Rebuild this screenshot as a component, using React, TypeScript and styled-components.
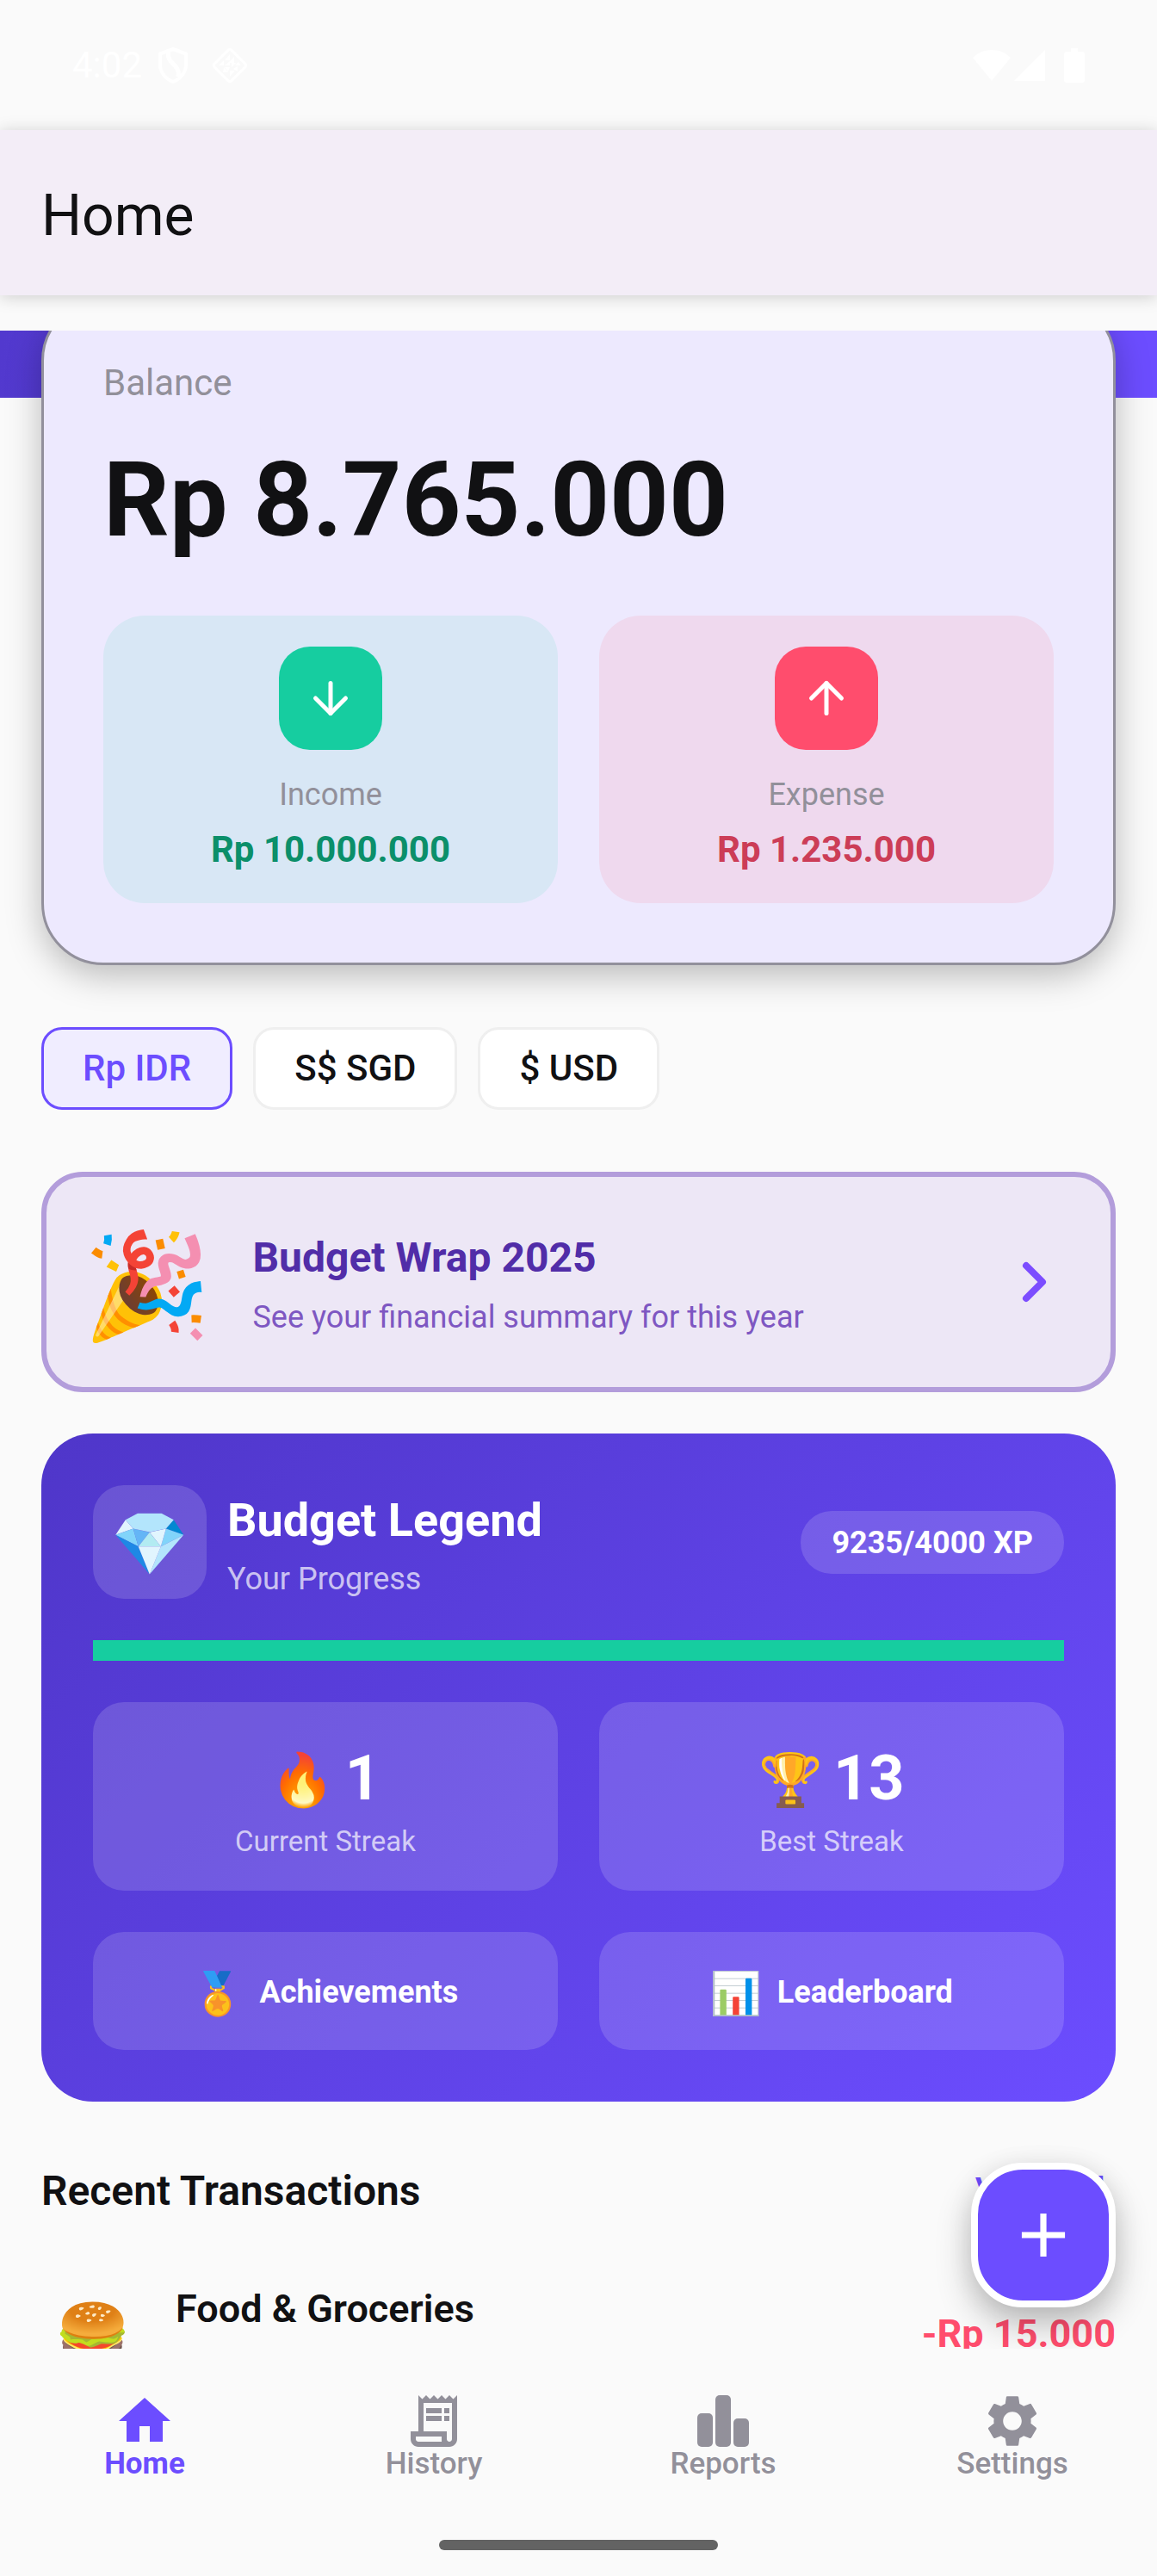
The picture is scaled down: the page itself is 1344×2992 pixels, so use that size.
import React from "react";
import styled, { createGlobalStyle } from "styled-components";
import { ArrowDown, ArrowUp } from "lucide-react";
import { MdAdd, MdHome, MdOutlineReceiptLong, MdSettings } from "react-icons/md";

const color = {
  page: "#fafafa",
  ink: "#111113",
  muted: "#92909a",
  primary: "#6c4dff",
  primaryDark: "#4f36c9",
  income: "#16cda0",
  expense: "#ff4d6d",
};

const GlobalStyle = createGlobalStyle`
  *, *::before, *::after { box-sizing: border-box; }
  body {
    margin: 0;
    background: ${color.page};
    color: ${color.ink};
    font-family: Roboto, "Noto Sans", sans-serif;
  }
  h1, h2, h3, p { margin: 0; font-weight: inherit; }
  button { font-family: inherit; border: 0; padding: 0; cursor: pointer; }
  a { color: inherit; text-decoration: none; }
  svg { display: block; flex: none; }
`;

const Shell = styled.div`
  display: flex;
  flex-direction: column;
  height: 100vh;
`;

/* Status bar and header */

const StatusBar = styled.div`
  display: flex;
  align-items: center;
  justify-content: space-between;
  height: 151px;
  flex: none;
  padding: 0 84px;
  color: #fff;
`;

const StatusGroup = styled.div<{ $gap: number }>`
  display: flex;
  align-items: center;
  gap: ${(p) => p.$gap}px;
`;

const Clock = styled.time`
  font-size: 42px;
  line-height: 52px;
`;

const Header = styled.header`
  display: flex;
  align-items: center;
  height: 192px;
  flex: none;
  margin-bottom: 41px;
  padding: 8px 48px 0;
  background: #f3edf7;
  box-shadow: 0 2px 18px rgba(0, 0, 0, 0.18);
`;

const PageTitle = styled.h1`
  font-size: 66px;
  line-height: 84px;
`;

/* Scrolling body */

const Body = styled.main`
  position: relative;
  flex: 1;
  min-height: 0;
  overflow: hidden;
`;

const Scroller = styled.div`
  height: 100%;
  overflow-x: hidden;
  overflow-y: auto;
  scrollbar-width: none;
`;

const Hero = styled.div`
  height: 78px;
  background: linear-gradient(100deg, #5239ce, ${color.primary} 96%);
`;

const Content = styled.div`
  padding: 0 48px;
  margin-top: -115px;
`;

const BalanceCard = styled.section`
  position: relative;
  padding: 69px;
  border: 3px solid #92909c;
  border-radius: 72px;
  background: #ede9fe;
  box-shadow: 0 12px 40px rgba(0, 0, 0, 0.26);
`;

const BalanceLabel = styled.h2`
  font-size: 42px;
  line-height: 52px;
  color: ${color.muted};
`;

const BalanceAmount = styled.p`
  margin: 36px 0 60px;
  font-size: 120px;
  line-height: 148px;
  font-weight: 700;
`;

const TwoColumns = styled.div`
  display: grid;
  grid-template-columns: 1fr 1fr;
  gap: 48px;
`;

const FlowTile = styled.div<{ $background: string }>`
  display: flex;
  flex-direction: column;
  align-items: center;
  padding: 36px;
  border-radius: 48px;
  background: ${(p) => p.$background};
`;

const FlowIcon = styled.span<{ $background: string }>`
  display: grid;
  place-items: center;
  width: 120px;
  height: 120px;
  margin-bottom: 26px;
  border-radius: 36px;
  background: ${(p) => p.$background};
  color: #fff;
`;

const FlowLabel = styled.h3`
  margin-bottom: 12px;
  font-size: 36px;
  line-height: 52px;
  color: ${color.muted};
`;

const FlowAmount = styled.p<{ $color: string }>`
  font-size: 42px;
  line-height: 52px;
  font-weight: 700;
  color: ${(p) => p.$color};
`;

/* Currency chips */

const Chips = styled.div`
  display: flex;
  gap: 24px;
  margin: 72px 0;
`;

const Chip = styled.button<{ $active: boolean }>`
  height: 96px;
  padding: 0 45px;
  border: 3px solid ${(p) => (p.$active ? color.primary : "#efefef")};
  border-radius: 24px;
  background: ${(p) => (p.$active ? "#f0edff" : "#fff")};
  color: ${(p) => (p.$active ? color.primary : color.ink)};
  font-size: 42px;
  line-height: 52px;
  font-weight: 500;
`;

/* Yearly wrap banner */

const Banner = styled.a`
  display: flex;
  align-items: center;
  gap: 48px;
  height: 256px;
  padding: 0 42px;
  border: 6px solid #b39ddb;
  border-radius: 48px;
  background: #ede7f6;
`;

const Emoji = styled.span<{ $size: number }>`
  padding-top: ${(p) => Math.round(p.$size / 12)}px;
  font-family: "Noto Color Emoji", sans-serif;
  font-size: ${(p) => p.$size}px;
  line-height: 1.2;
  font-weight: 400;
`;

const Stack = styled.div`
  display: flex;
  flex-direction: column;
  gap: 12px;
  flex: 1;
  padding-top: 2px;
`;

const BannerTitle = styled.h2`
  font-size: 48px;
  line-height: 68px;
  font-weight: 700;
  color: #512da8;
`;

const BannerText = styled.p`
  font-size: 36px;
  line-height: 46px;
  color: #7e57c2;
`;

/* Progress card */

const ProgressCard = styled.section`
  display: flex;
  flex-direction: column;
  gap: 48px;
  margin: 48px 0 74px;
  padding: 60px;
  border-radius: 60px;
  background: linear-gradient(135deg, ${color.primaryDark}, ${color.primary});
  color: #fff;
`;

const RankRow = styled.div`
  display: flex;
  align-items: center;
  gap: 24px;
`;

const RankBadge = styled.span`
  display: grid;
  place-items: center;
  width: 132px;
  height: 132px;
  border-radius: 36px;
  background: rgba(255, 255, 255, 0.15);
`;

const RankTitle = styled.h2`
  font-size: 54px;
  line-height: 72px;
  font-weight: 700;
`;

const RankText = styled.p`
  font-size: 36px;
  line-height: 40px;
  color: rgba(255, 255, 255, 0.7);
`;

const XpPill = styled.span`
  padding: 13px 36px 12px;
  border-radius: 36px;
  background: rgba(255, 255, 255, 0.15);
  font-size: 36px;
  line-height: 48px;
  font-weight: 700;
`;

const ProgressTrack = styled.div`
  height: 24px;
  background: rgba(255, 255, 255, 0.2);
`;

const ProgressFill = styled.div`
  height: 100%;
  background: ${color.income};
`;

const StreakTile = styled.div`
  padding: 36px;
  border-radius: 36px;
  background: rgba(255, 255, 255, 0.15);
  text-align: center;
`;

const StreakValue = styled.p`
  display: flex;
  align-items: center;
  justify-content: center;
  gap: 12px;
  height: 105px;
  font-size: 72px;
  line-height: 105px;
  font-weight: 700;
`;

const StreakLabel = styled.h3`
  font-size: 33px;
  line-height: 42px;
  color: rgba(255, 255, 255, 0.7);
`;

const CardButton = styled.button`
  display: flex;
  align-items: center;
  justify-content: center;
  gap: 18px;
  height: 137px;
  padding-top: 2px;
  border-radius: 36px;
  background: rgba(255, 255, 255, 0.15);
  color: #fff;
  font-size: 36px;
  line-height: 48px;
  font-weight: 700;
`;

/* Recent transactions */

const SectionHead = styled.div`
  display: flex;
  align-items: center;
  justify-content: space-between;
  margin-bottom: 76px;
`;

const SectionTitle = styled.h2`
  font-size: 48px;
  line-height: 60px;
  font-weight: 600;
`;

const ViewAll = styled.a`
  padding: 0 12px;
  font-size: 42px;
  line-height: 52px;
  font-weight: 500;
  color: ${color.primary};
`;

const Transaction = styled.article`
  display: flex;
  align-items: center;
  gap: 36px;
`;

const CategoryIcon = styled.span`
  display: grid;
  place-items: center;
  width: 120px;
  height: 120px;
`;

const Category = styled.h3`
  flex: 1;
  min-height: 112px;
  font-size: 45px;
  line-height: 54px;
  font-weight: 600;
`;

const Amount = styled.p`
  font-size: 45px;
  line-height: 54px;
  font-weight: 700;
  color: ${color.expense};
`;

const AddButton = styled.button`
  position: absolute;
  right: 48px;
  bottom: 48px;
  display: grid;
  place-items: center;
  width: 168px;
  height: 168px;
  border: 8px solid #fff;
  border-radius: 60px;
  background: ${color.primary};
  color: #fff;
  box-shadow: 0 20px 40px rgba(0, 0, 0, 0.24), 0 4px 30px rgba(0, 0, 0, 0.08);
`;

/* Bottom navigation */

const Footer = styled.footer`
  flex: none;
  padding: 48px 0 30px;
`;

const Tabs = styled.nav`
  display: grid;
  grid-template-columns: repeat(4, 1fr);
  margin-bottom: 74px;
`;

const Tab = styled.a<{ $active: boolean }>`
  display: flex;
  flex-direction: column;
  align-items: center;
  font-size: 35px;
  line-height: 28px;
  font-weight: ${(p) => (p.$active ? 700 : 500)};
  color: ${(p) => (p.$active ? color.primary : color.muted)};
`;

const HomeHandle = styled.div`
  width: 324px;
  height: 12px;
  margin: 0 auto;
  border-radius: 6px;
  background: #636363;
`;

const ShieldIcon = () => (
  <svg width="36" height="44" viewBox="0 0 36 44" fill="none" stroke="currentColor" strokeWidth="4">
    <path d="M18 3 L33 8.500 V21 C33 30 27 37.500 18 41 C9 37.500 3 30 3 21 V8.500 Z" strokeLinejoin="round" />
    <path d="M13 6 C9 20 27 20 24 35" strokeWidth="5" />
  </svg>
);

const DiamondIcon = () => (
  <svg width="44" height="44" viewBox="0 0 44 44" fill="currentColor">
    <rect x="8" y="8" width="28" height="28" rx="3" transform="rotate(45 22 22)" fill="none" stroke="currentColor" strokeWidth="3" />
    <path d="M22 9v7h-6zM22 17l5-5v7h-5zM9 22l6-6v6zM16 22l6-5v5zM24 19h5l-5 5zM35 22h-7l4-4zM22 24h-6l4 5zM22 35v-7h6zM15 24l-1 6h6zM26 26l5-3v6z" />
  </svg>
);

const WifiIcon = () => (
  <svg width="44" height="36" viewBox="0 0 44 36" fill="currentColor">
    <path d="M0 9C12-3 32-3 44 9L22 36Z" />
  </svg>
);

const SignalIcon = () => (
  <svg width="36" height="36" viewBox="0 0 36 36" fill="currentColor">
    <path d="M36 0V36H0Z" />
  </svg>
);

const BatteryIcon = () => (
  <svg width="24" height="40" viewBox="0 0 24 40" fill="currentColor">
    <path d="M8 0h8v4h5q3 0 3 3v30q0 3-3 3H3q-3 0-3-3V7q0-3 3-3h5z" />
  </svg>
);

const ChevronIcon = () => (
  <svg width="96" height="96" viewBox="0 0 96 96" fill="none" stroke="#7c4dff" strokeWidth="8" strokeLinecap="round" strokeLinejoin="round">
    <path d="M40 29L59 48L40 67" />
  </svg>
);

const BarsIcon = () => (
  <svg width="72" height="72" viewBox="0 0 72 72" fill="currentColor">
    <rect x="6" y="27" width="18" height="39" rx="5" />
    <rect x="27" y="6" width="18" height="60" rx="5" />
    <rect x="48" y="33" width="18" height="33" rx="5" />
  </svg>
);

const currencies = [
  { code: "IDR", label: "Rp IDR" },
  { code: "SGD", label: "S$ SGD" },
  { code: "USD", label: "$ USD" },
];

const tabs = [
  { label: "Home", icon: <MdHome size={72} /> },
  { label: "History", icon: <MdOutlineReceiptLong size={72} /> },
  { label: "Reports", icon: <BarsIcon /> },
  { label: "Settings", icon: <MdSettings size={72} /> },
];

const xp = { current: 9235, target: 4000 };

export default function App() {
  const [currency, setCurrency] = React.useState("IDR");
  const progress = Math.min(100, (xp.current / xp.target) * 100);

  return (
    <Shell>
      <GlobalStyle />
      <StatusBar>
        <StatusGroup $gap={18}>
          <Clock>4:02</Clock>
          <StatusGroup $gap={26}>
            <ShieldIcon />
            <DiamondIcon />
          </StatusGroup>
        </StatusGroup>
        <StatusGroup $gap={22}>
          <StatusGroup $gap={4}>
            <WifiIcon />
            <SignalIcon />
          </StatusGroup>
          <BatteryIcon />
        </StatusGroup>
      </StatusBar>

      <Header>
        <PageTitle>Home</PageTitle>
      </Header>

      <Body>
        <Scroller>
          <Hero />
          <Content>
            <BalanceCard>
              <BalanceLabel>Balance</BalanceLabel>
              <BalanceAmount>Rp 8.765.000</BalanceAmount>
              <TwoColumns>
                <FlowTile $background="#d8e7f5">
                  <FlowIcon $background={color.income}>
                    <ArrowDown size={60} />
                  </FlowIcon>
                  <FlowLabel>Income</FlowLabel>
                  <FlowAmount $color="#0b8f6a">Rp 10.000.000</FlowAmount>
                </FlowTile>
                <FlowTile $background="#efd9ee">
                  <FlowIcon $background={color.expense}>
                    <ArrowUp size={60} />
                  </FlowIcon>
                  <FlowLabel>Expense</FlowLabel>
                  <FlowAmount $color="#cc3d57">Rp 1.235.000</FlowAmount>
                </FlowTile>
              </TwoColumns>
            </BalanceCard>

            <Chips>
              {currencies.map((c) => (
                <Chip
                  key={c.code}
                  type="button"
                  $active={c.code === currency}
                  aria-pressed={c.code === currency}
                  onClick={() => setCurrency(c.code)}
                >
                  {c.label}
                </Chip>
              ))}
            </Chips>

            <Banner href="#wrap">
              <Emoji $size={120}>🎉</Emoji>
              <Stack>
                <BannerTitle>Budget Wrap 2025</BannerTitle>
                <BannerText>See your financial summary for this year</BannerText>
              </Stack>
              <ChevronIcon />
            </Banner>

            <ProgressCard>
              <RankRow>
                <RankBadge>
                  <Emoji $size={72}>💎</Emoji>
                </RankBadge>
                <Stack>
                  <RankTitle>Budget Legend</RankTitle>
                  <RankText>Your Progress</RankText>
                </Stack>
                <XpPill>
                  {xp.current}/{xp.target} XP
                </XpPill>
              </RankRow>
              <ProgressTrack
                role="progressbar"
                aria-label="Experience points"
                aria-valuemin={0}
                aria-valuemax={100}
                aria-valuenow={progress}
              >
                <ProgressFill style={{ width: `${progress}%` }} />
              </ProgressTrack>
              <TwoColumns>
                <StreakTile>
                  <StreakValue>
                    <Emoji $size={60}>🔥</Emoji>1
                  </StreakValue>
                  <StreakLabel>Current Streak</StreakLabel>
                </StreakTile>
                <StreakTile>
                  <StreakValue>
                    <Emoji $size={60}>🏆</Emoji>13
                  </StreakValue>
                  <StreakLabel>Best Streak</StreakLabel>
                </StreakTile>
              </TwoColumns>
              <TwoColumns>
                <CardButton type="button">
                  <Emoji $size={48}>🏅</Emoji>Achievements
                </CardButton>
                <CardButton type="button">
                  <Emoji $size={48}>📊</Emoji>Leaderboard
                </CardButton>
              </TwoColumns>
            </ProgressCard>

            <SectionHead>
              <SectionTitle>Recent Transactions</SectionTitle>
              <ViewAll href="#transactions">View All</ViewAll>
            </SectionHead>
            <Transaction>
              <CategoryIcon>
                <Emoji $size={72}>🍔</Emoji>
              </CategoryIcon>
              <Category>Food &amp; Groceries</Category>
              <Amount>-Rp 15.000</Amount>
            </Transaction>
          </Content>
        </Scroller>
        <AddButton type="button" aria-label="Add transaction">
          <MdAdd size={86} />
        </AddButton>
      </Body>

      <Footer>
        <Tabs aria-label="Main">
          {tabs.map((t) => (
            <Tab
              key={t.label}
              href={`#${t.label.toLowerCase()}`}
              $active={t.label === "Home"}
              aria-current={t.label === "Home" ? "page" : undefined}
            >
              {t.icon}
              {t.label}
            </Tab>
          ))}
        </Tabs>
        <HomeHandle />
      </Footer>
    </Shell>
  );
}
